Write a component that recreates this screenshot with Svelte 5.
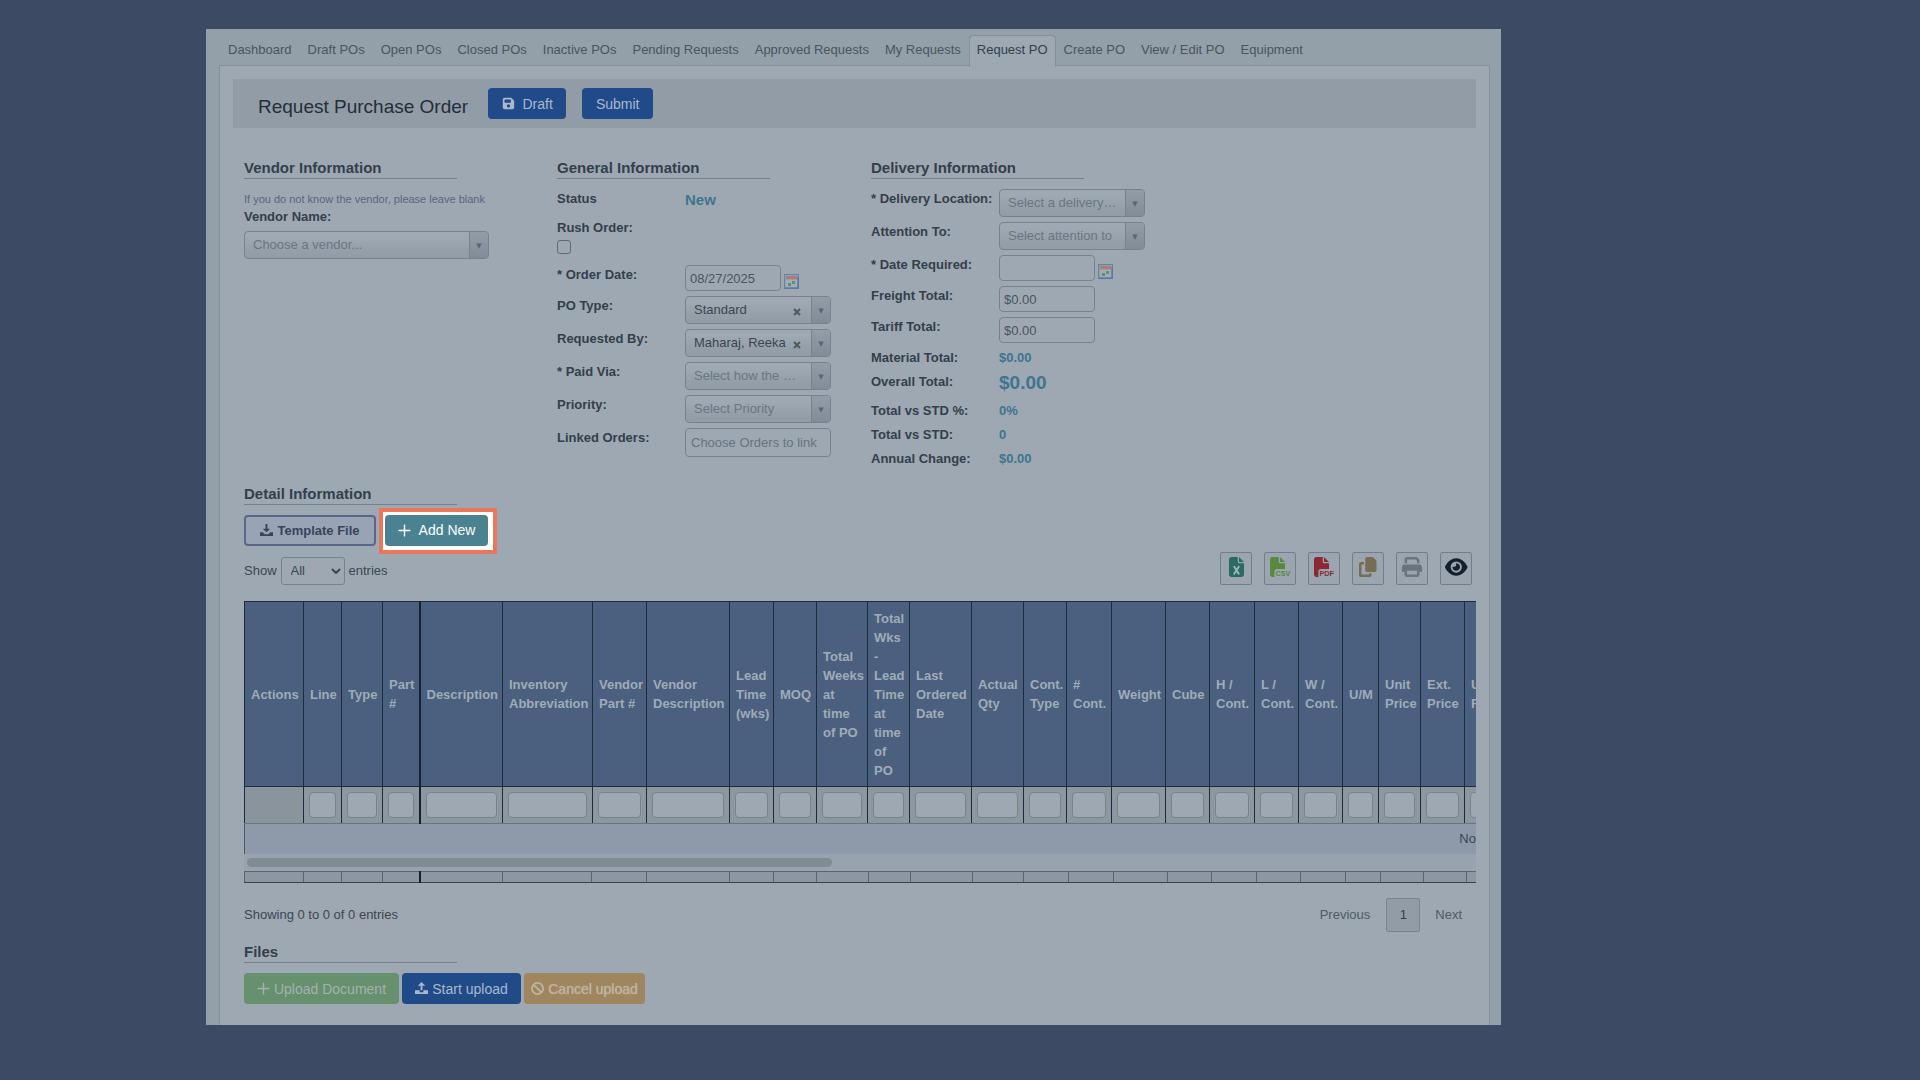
<script lang="ts">
    type Field = {
        id: string;
        label: string;
        kind: 'text' | 'check' | 'date' | 'money' | 'select' | 'link' | 'total';
        value?: string;
        placeholder?: string;
        big?: boolean;
    };

    const tabs = [
        'Dashboard', 'Draft POs', 'Open POs', 'Closed POs', 'Inactive POs', 'Pending Requests',
        'Approved Requests', 'My Requests', 'Request PO', 'Create PO', 'View / Edit PO', 'Equipment',
    ];
    const activeTab = 'Request PO';

    const general: Field[] = [
        { id: 'status', label: 'Status', kind: 'text', value: 'New' },
        { id: 'rush', label: 'Rush Order:', kind: 'check' },
        { id: 'order-date', label: '* Order Date:', kind: 'date', value: '08/27/2025' },
        { id: 'po-type', label: 'PO Type:', kind: 'select', value: 'Standard' },
        { id: 'requested-by', label: 'Requested By:', kind: 'select', value: 'Maharaj, Reeka' },
        { id: 'paid-via', label: '* Paid Via:', kind: 'select', placeholder: 'Select how the …' },
        { id: 'priority', label: 'Priority:', kind: 'select', placeholder: 'Select Priority' },
        { id: 'linked', label: 'Linked Orders:', kind: 'link', placeholder: 'Choose Orders to link' },
    ];

    const delivery: Field[] = [
        { id: 'location', label: '* Delivery Location:', kind: 'select', placeholder: 'Select a delivery…' },
        { id: 'attention', label: 'Attention To:', kind: 'select', placeholder: 'Select attention to' },
        { id: 'required', label: '* Date Required:', kind: 'date', value: '' },
        { id: 'freight', label: 'Freight Total:', kind: 'money', value: '$0.00' },
        { id: 'tariff', label: 'Tariff Total:', kind: 'money', value: '$0.00' },
        { id: 'material', label: 'Material Total:', kind: 'total', value: '$0.00' },
        { id: 'overall', label: 'Overall Total:', kind: 'total', value: '$0.00', big: true },
        { id: 'std-pct', label: 'Total vs STD %:', kind: 'total', value: '0%' },
        { id: 'std', label: 'Total vs STD:', kind: 'total', value: '0' },
        { id: 'annual', label: 'Annual Change:', kind: 'total', value: '$0.00' },
    ];

    const columns = [
        { name: 'Actions', width: 59, foot: 59 },
        { name: 'Line', width: 38, foot: 38 },
        { name: 'Type', width: 41, foot: 41 },
        { name: 'Part #', width: 37, foot: 37 },
        { name: 'Description', width: 83, foot: 83 },
        { name: 'Inventory Abbreviation', width: 90, foot: 89 },
        { name: 'Vendor Part #', width: 54, foot: 55 },
        { name: 'Vendor Description', width: 83, foot: 83 },
        { name: 'Lead Time (wks)', width: 44, foot: 44 },
        { name: 'MOQ', width: 43, foot: 43 },
        { name: 'Total Weeks at time of PO', width: 51, foot: 52 },
        { name: 'Total Wks - Lead Time at time of PO', width: 42, foot: 42 },
        { name: 'Last Ordered Date', width: 62, foot: 62 },
        { name: 'Actual Qty', width: 52, foot: 51 },
        { name: 'Cont. Type', width: 43, foot: 45 },
        { name: '# Cont.', width: 45, foot: 45 },
        { name: 'Weight', width: 54, foot: 54 },
        { name: 'Cube', width: 44, foot: 44 },
        { name: 'H / Cont.', width: 45, foot: 45 },
        { name: 'L / Cont.', width: 44, foot: 44 },
        { name: 'W / Cont.', width: 44, foot: 45 },
        { name: 'U/M', width: 36, foot: 35 },
        { name: 'Unit Price', width: 42, foot: 43 },
        { name: 'Ext. Price', width: 44, foot: 43 },
        { name: 'Unit Freight', width: 54, foot: 54 },
    ];
</script>

{#snippet field(f: Field)}
    <div class="row {f.kind}" class:big={f.big}>
        {#if f.kind === 'text' || f.kind === 'total'}
            <span class="label">{f.label}</span>
            <output class="value">{f.value}</output>
        {:else}
            <label class="label" for={f.id}>{f.label}</label>
            {#if f.kind === 'check'}
                <input type="checkbox" id={f.id} />
            {:else if f.kind === 'select'}
                <div class="picker">
                    <select id={f.id} class:chosen={f.value}>
                        <option>{f.value ?? f.placeholder}</option>
                    </select>
                    {#if f.value}
                        <button class="clear" aria-label="Clear {f.label}">
                            <svg viewBox="0 0 8 8"><path d="M1 1l6 6M7 1l-6 6" stroke="currentColor" stroke-width="2" /></svg>
                        </button>
                    {/if}
                </div>
            {:else}
                <input class="box" type="text" id={f.id} value={f.value ?? ''} placeholder={f.placeholder} />
                {#if f.kind === 'date'}
                    <button class="calendar" aria-label="Open calendar">
                        <svg viewBox="0 0 15 15">
                            <rect x="0.5" y="0.5" width="14" height="14" fill="#8fa0b3" stroke="#6682a5" />
                            <rect x="2" y="2" width="11" height="3" fill="#b07d6c" />
                            <rect x="2" y="6" width="11" height="7" fill="#a1adb3" />
                            <path d="M4 9h3v3H4zM8 7h3v3H8z" fill="#5f8d78" />
                            <path d="M1 14h13V3" fill="none" stroke="#4e6f9c" />
                        </svg>
                    </button>
                {/if}
            {/if}
        {/if}
    </div>
{/snippet}

<main class="panel">
    <nav class="tabs">
        {#each tabs as tab}
            <a href="#{tab}" class:active={tab === activeTab}>{tab}</a>
        {/each}
    </nav>

    <div class="card">
        <header class="band">
            <h1>Request Purchase Order</h1>
            <button class="btn primary draft">
                <svg class="icon" viewBox="0 0 448 512"><path d="M64 32C28.7 32 0 60.7 0 96L0 416c0 35.3 28.7 64 64 64l320 0c35.3 0 64-28.7 64-64l0-242.7c0-17-6.7-33.3-18.7-45.3L352 50.7C340 38.7 323.7 32 306.7 32L64 32zm0 96c0-17.7 14.3-32 32-32l192 0c17.7 0 32 14.3 32 32l0 64c0 17.7-14.3 32-32 32L96 224c-17.7 0-32-14.3-32-32l0-64zM224 288a64 64 0 1 1 0 128 64 64 0 1 1 0-128z" /></svg>
                Draft
            </button>
            <button class="btn primary submit">Submit</button>
        </header>

        <div class="content">
            <div class="sections">
                <section>
                    <h2>Vendor Information</h2>
                    <p class="hint">If you do not know the vendor, please leave blank</p>
                    <label class="label" for="vendor">Vendor Name:</label>
                    <div class="picker wide">
                        <select id="vendor"><option>Choose a vendor...</option></select>
                    </div>
                </section>
                <section>
                    <h2>General Information</h2>
                    {#each general as f}{@render field(f)}{/each}
                </section>
                <section>
                    <h2>Delivery Information</h2>
                    {#each delivery as f}{@render field(f)}{/each}
                </section>
            </div>

            <h2>Detail Information</h2>
            <div class="actions">
                <button class="btn template">
                    <svg class="icon" viewBox="0 0 14 14"><path d="M6 0h2v5h3L7 9 3 5h3zM0 9h3l2 2h4l2-2h3v4H0z" /></svg>
                    Template File
                </button>
                <div class="spotlight">
                    <button class="btn add">
                        <svg class="icon plus" viewBox="0 0 12 12"><path d="M6 1v10M1 6h10" /></svg>
                        Add New
                    </button>
                </div>
            </div>

            <div class="toolbar">
                <div class="length">
                    <label for="length">Show</label>
                    <div class="length-box">
                        <select id="length"><option>All</option></select>
                        <svg viewBox="0 0 10 6"><path d="M1 1l4 4 4-4" fill="none" stroke="currentColor" stroke-width="2" /></svg>
                    </div>
                    <span>entries</span>
                </div>
                <div class="exports">
                    <button aria-label="Excel">
                        <svg class="excel" viewBox="0 0 384 512">
                            <path d="M64 0C28.7 0 0 28.7 0 64L0 448c0 35.3 28.7 64 64 64l256 0c35.3 0 64-28.7 64-64l0-288-128 0c-17.7 0-32-14.3-32-32L224 0 64 0zM256 0l0 128 128 0L256 0z" />
                            <path d="M134 250l116 180M250 250l-116 180" stroke="#a6b2bb" stroke-width="50" stroke-linecap="round" />
                        </svg>
                    </button>
                    <button aria-label="CSV">
                        <svg class="csv" viewBox="0 0 512 512">
                            <path d="M0 64C0 28.7 28.7 0 64 0L224 0l0 128c0 17.7 14.3 32 32 32l128 0 0 144-208 0c-35.3 0-64 28.7-64 64l0 144-48 0c-35.3 0-64-28.7-64-64L0 64zm384 64l-128 0L256 0 384 128z" />
                            <text x="140" y="496">CSV</text>
                        </svg>
                    </button>
                    <button aria-label="PDF">
                        <svg class="pdf" viewBox="0 0 512 512">
                            <path d="M0 64C0 28.7 28.7 0 64 0L224 0l0 128c0 17.7 14.3 32 32 32l128 0 0 144-208 0c-35.3 0-64 28.7-64 64l0 144-48 0c-35.3 0-64-28.7-64-64L0 64zm384 64l-128 0L256 0 384 128z" />
                            <text x="140" y="496">PDF</text>
                        </svg>
                    </button>
                    <button aria-label="Copy">
                        <svg class="copy" viewBox="0 0 448 512"><path d="M208 0L332.1 0c12.7 0 24.9 5.1 33.9 14.1l67.9 67.9c9 9 14.1 21.2 14.1 33.9L448 336c0 26.5-21.5 48-48 48l-192 0c-26.5 0-48-21.5-48-48l0-288c0-26.5 21.5-48 48-48zM48 128l80 0 0 64-64 0 0 256 192 0 0-32 64 0 0 48c0 26.5-21.5 48-48 48L48 512c-26.5 0-48-21.5-48-48L0 176c0-26.5 21.5-48 48-48z" /></svg>
                    </button>
                    <button aria-label="Print">
                        <svg class="print" viewBox="0 0 512 512"><path d="M128 0C92.7 0 64 28.7 64 64l0 96 64 0 0-96 226.7 0L384 93.3l0 66.7 64 0 0-66.7c0-17-6.7-33.3-18.7-45.3L400 18.7C388 6.7 371.7 0 354.7 0L128 0zM384 352l0 96-256 0 0-96 256 0zm64 32l32 0c17.7 0 32-14.3 32-32l0-96c0-35.3-28.7-64-64-64L64 192c-35.3 0-64 28.7-64 64l0 96c0 17.7 14.3 32 32 32l32 0 0 64c0 35.3 28.7 64 64 64l256 0c35.3 0 64-28.7 64-64l0-64z" /></svg>
                    </button>
                    <button aria-label="Column visibility">
                        <svg class="eye" viewBox="0 0 576 512"><path d="M288 32c-80.8 0-145.5 36.8-192.6 80.6C48.6 156 17.3 208 2.5 243.7c-3.3 7.9-3.3 16.7 0 24.6C17.3 304 48.6 356 95.4 399.4C142.5 443.2 207.2 480 288 480s145.5-36.8 192.6-80.6c46.8-43.5 78.1-95.4 93-131.1c3.3-7.9 3.3-16.7 0-24.6c-14.9-35.7-46.2-87.7-93-131.1C433.5 68.8 368.8 32 288 32zM144 256a144 144 0 1 1 288 0 144 144 0 1 1 -288 0zm144-64c0 35.3-28.7 64-64 64c-7.1 0-13.9-1.2-20.3-3.3c-5.5-1.8-11.9 1.6-11.7 7.4c.3 6.9 1.3 13.8 3.2 20.7c13.7 51.2 66.4 81.6 117.6 67.9s81.6-66.4 67.9-117.6c-11.1-41.5-47.8-69.4-88.6-71.1c-5.8-.2-9.2 6.1-7.4 11.7c2.1 6.4 3.3 13.2 3.3 20.3z" /></svg>
                    </button>
                </div>
            </div>

            <div class="scroller">
                <table class="lines">
                    <colgroup>
                        {#each columns as c}<col style="width: {c.width}px" />{/each}
                        <col />
                    </colgroup>
                    <thead>
                        <tr>
                            {#each columns as c}<th>{c.name}</th>{/each}
                            <th></th>
                        </tr>
                        <tr class="filters">
                            {#each columns as c, i}
                                <td>{#if i > 0}<input type="text" aria-label="Filter {c.name}" />{/if}</td>
                            {/each}
                            <td></td>
                        </tr>
                    </thead>
                    <tbody>
                        <tr><td class="empty" colspan={columns.length + 1}>No data available in table</td></tr>
                    </tbody>
                </table>
                <div class="track"><div class="thumb"></div></div>
                <table class="totals">
                    <colgroup>
                        {#each columns as c}<col style="width: {c.foot}px" />{/each}
                        <col />
                    </colgroup>
                    <tbody>
                        <tr>{#each columns as _}<td></td>{/each}<td></td></tr>
                    </tbody>
                </table>
            </div>

            <div class="pager">
                <span>Showing 0 to 0 of 0 entries</span>
                <div class="pages">
                    <button>Previous</button>
                    <button class="current">1</button>
                    <button>Next</button>
                </div>
            </div>

            <h2>Files</h2>
            <div class="uploads">
                <button class="btn green">
                    <svg class="icon plus" viewBox="0 0 12 12"><path d="M6 1v10M1 6h10" /></svg>
                    Upload Document
                </button>
                <button class="btn primary start">
                    <svg class="icon" viewBox="0 0 14 14"><path d="M7 0l4 4H8v5H6V4H3zM0 9h5v2h4V9h5v4H0z" /></svg>
                    Start upload
                </button>
                <button class="btn orange">
                    <svg class="icon" viewBox="0 0 14 14"><path d="M7 1a6 6 0 1 1 0 12A6 6 0 1 1 7 1zM3 3l8 8" fill="none" stroke="currentColor" stroke-width="2" /></svg>
                    Cancel upload
                </button>
            </div>
        </div>
    </div>
</main>

<style>
    :global(body) {
        background: #3c4b63;
    }

    .panel {
        margin: 29px 419px 55px 206px;
        padding: 6px 11px 0 13px;
        background: #939fa9;
        color: #3b4651;
        font: 13px/16px "Liberation Sans", Arial, sans-serif;
    }

    button,
    input,
    select {
        box-sizing: border-box;
        margin: 0;
        font: inherit;
        color: inherit;
    }

    svg {
        display: block;
    }

    .tabs {
        display: flex;
        height: 30px;
        padding-left: 1px;
    }

    .tabs a {
        height: 30px;
        padding: 0 7px;
        border: 1px solid transparent;
        border-bottom: 0;
        border-radius: 4px 4px 0 0;
        line-height: 27px;
        color: #4a5560;
        text-decoration: none;
        white-space: nowrap;
    }

    .tabs a.active {
        height: 31px;
        z-index: 1;
        background: #9da8b2;
        border-color: #848f99;
        color: #333f4b;
    }

    .card {
        padding: 13px 13px 21px;
        border: 1px solid #848f99;
        border-bottom: 0;
        background: #9da8b2;
    }

    .band {
        display: flex;
        box-sizing: border-box;
        height: 49px;
        padding: 9px 0 0 25px;
        background: #919ca6;
    }

    h1 {
        margin: 0 20px 0 0;
        font-size: 19px;
        font-weight: normal;
        line-height: 37px;
        color: #232e3a;
    }

    .btn {
        display: flex;
        align-items: center;
        justify-content: center;
        gap: 8px;
        height: 31px;
        padding: 0;
        border: 0;
        border-radius: 4px;
        font-size: 14px;
        white-space: nowrap;
    }

    .icon {
        width: 13px;
        height: 13px;
        fill: currentColor;
    }

    .plus {
        stroke: currentColor;
        stroke-width: 1.3;
        stroke-linecap: round;
    }

    .primary {
        background: #214a89;
        color: #a9b9cd;
    }

    .draft {
        width: 78px;
        margin-right: 16px;
    }

    .submit {
        width: 71px;
    }

    .content {
        padding: 30px 0 0 11px;
    }

    .sections {
        display: grid;
        grid-template-columns: 313px 314px 1fr;
        margin-bottom: 11px;
    }

    h2 {
        width: 213px;
        margin: 0 0 10px;
        border-bottom: 1px solid #74808b;
        font-size: 15px;
        line-height: 20px;
        color: #333f4b;
    }

    .hint {
        margin: 0;
        padding: 2px 0;
        font-size: 11px;
        color: #5c6382;
        white-space: nowrap;
    }

    .label {
        flex: none;
        width: 128px;
        padding-top: 2px;
        font-weight: bold;
        color: #333f4b;
        white-space: nowrap;
    }

    .row {
        display: flex;
        align-items: flex-start;
        height: 33px;
    }

    .row.text {
        height: 29px;
    }

    .row.check {
        flex-direction: column;
        height: 47px;
        gap: 4px;
    }

    .row.date,
    .row.money {
        height: 31px;
    }

    .row.total {
        height: 24px;
    }

    .row.big {
        height: 29px;
    }

    .value {
        padding-top: 2px;
        font-weight: bold;
        color: #40748f;
    }

    .text .value {
        font-size: 15px;
        line-height: 18px;
    }

    .big .value {
        font-size: 19px;
        line-height: 18px;
    }

    .check input {
        appearance: none;
        width: 14px;
        height: 14px;
        border: 1px solid #5f6a75;
        border-radius: 3px;
    }

    .box {
        width: 96px;
        height: 26px;
        padding: 0 4px;
        border: 1px solid #76828d;
        border-radius: 4px;
        background: #9da8b2;
        color: #4a5560;
    }

    .link .box {
        width: 146px;
        height: 29px;
        padding: 0 5px;
    }

    .box::placeholder {
        color: #67737f;
    }

    .calendar {
        width: 15px;
        height: 15px;
        margin: 9px 0 0 3px;
        padding: 0;
        border: 0;
        background: none;
    }

    .picker {
        position: relative;
        width: 146px;
        height: 28px;
    }

    .picker.wide {
        width: 245px;
        margin-top: 6px;
    }

    .picker select {
        appearance: none;
        width: 100%;
        height: 100%;
        padding: 0 20px 0 8px;
        border: 1px solid #76828d;
        border-radius: 4px;
        background: linear-gradient(#9fa9b3 20%, #949faa 70%, #929ca7);
        color: #6a7682;
    }

    .picker select.chosen {
        color: #3b4651;
    }

    .picker::after {
        content: "▼";
        position: absolute;
        top: 1px;
        right: 1px;
        width: 18px;
        height: 26px;
        border-left: 1px solid #76828d;
        border-radius: 0 3px 3px 0;
        background: linear-gradient(#929da8, #818c98);
        font: 7px/28px "DejaVu Sans", sans-serif;
        text-align: center;
        color: #5b6672;
        pointer-events: none;
    }

    .clear {
        position: absolute;
        top: 12px;
        right: 30px;
        width: 8px;
        height: 8px;
        padding: 0;
        border: 0;
        background: none;
        color: #4c5864;
    }

    .actions {
        display: flex;
        align-items: center;
        gap: 3px;
        height: 31px;
    }

    .template {
        width: 132px;
        gap: 4px;
        border: 2px solid #5b6788;
        background: #98a3b4;
        font-size: 13px;
        font-weight: bold;
        color: #38435c;
    }

    .spotlight {
        padding: 3px 5px 4px 2px;
        border: 4px solid #e8775c;
        background: #fff;
    }

    .add {
        width: 103px;
        background: #4b8292;
        color: #fff;
    }

    .toolbar {
        display: flex;
        justify-content: space-between;
        align-items: flex-end;
        height: 33px;
        margin: 6px 4px 16px 0;
    }

    .length {
        display: flex;
        align-items: center;
        gap: 4px;
    }

    .length-box {
        position: relative;
        width: 64px;
        height: 28px;
    }

    .length-box select {
        appearance: none;
        width: 100%;
        height: 100%;
        padding: 0 9px;
        border: 1px solid #76828d;
        border-radius: 3px;
        background: #9da8b2;
    }

    .length-box svg {
        position: absolute;
        top: 11px;
        right: 4px;
        width: 10px;
        height: 6px;
        pointer-events: none;
    }

    .exports {
        display: flex;
        gap: 12px;
    }

    .exports button {
        display: grid;
        place-items: center;
        width: 32px;
        height: 33px;
        padding: 0 0 3px;
        border: 1px solid #737e89;
        border-radius: 2px;
        background: #9aa5af;
    }

    .exports svg {
        height: 20px;
        overflow: visible;
    }

    .exports text {
        font: bold 185px "Liberation Sans", Arial, sans-serif;
    }

    .excel {
        fill: #2b6a62;
    }

    .csv {
        fill: #59883f;
    }

    .pdf {
        fill: #8c2836;
    }

    .copy {
        fill: #786c54;
    }

    .print {
        fill: #6a747e;
    }

    .eye {
        fill: #14202e;
    }

    .scroller {
        overflow: hidden;
    }

    table {
        width: 2576px;
        border-collapse: collapse;
        table-layout: fixed;
    }

    th {
        height: 184px;
        padding: 0 4px 0 6px;
        border: 1px solid #1c2b40;
        background: #4a607e;
        line-height: 19px;
        text-align: left;
        color: #a0abb8;
    }

    .filters td {
        height: 36px;
        padding: 0 5px;
        border: 1px solid #1c2b40;
        border-bottom-color: #6a7580;
        background: #8c979f;
    }

    .filters td:first-child {
        background: #8a949c;
    }

    .filters input {
        display: block;
        width: 100%;
        height: 26px;
        border: 1px solid #78838d;
        border-radius: 4px;
        background: #9da8b2;
    }

    th:nth-child(4),
    .filters td:nth-child(4),
    .totals td:nth-child(4) {
        border-right: 2px solid #16202e;
    }

    .empty {
        height: 30px;
        padding: 0;
        border-left: 1px solid #4c5869;
        background: #8e99aa;
        text-align: center;
        color: #3b4651;
    }

    .track {
        padding: 4px 3px;
        background: #98a3af;
    }

    .thumb {
        width: 585px;
        height: 9px;
        border-radius: 5px;
        background: #808b96;
    }

    .totals td {
        height: 10px;
        padding: 0;
        border: 1px solid #5b6671;
        border-bottom-color: #36414d;
        background: #8c979f;
    }

    .pager {
        display: flex;
        justify-content: space-between;
        align-items: center;
        height: 34px;
        margin: 15px 5px 10px 0;
    }

    .pages {
        display: flex;
    }

    .pages button {
        height: 34px;
        padding: 0 9px;
        border: 0;
        background: none;
        color: #4f5a65;
    }

    .pages button.current {
        width: 34px;
        margin: 0 6px 0 7px;
        border: 1px solid #7a8590;
        border-radius: 2px;
        background: #919ca6;
        color: #333f4b;
    }

    .uploads {
        display: flex;
        gap: 3px;
    }

    .uploads .btn {
        gap: 4px;
    }

    .green {
        width: 155px;
        background: #66906e;
        color: #a3b3ae;
    }

    .start {
        width: 119px;
    }

    .orange {
        width: 121px;
        background: #a0865f;
        color: #bdb4a2;
        text-shadow: 0 0 1px #bdb4a2;
    }
</style>
